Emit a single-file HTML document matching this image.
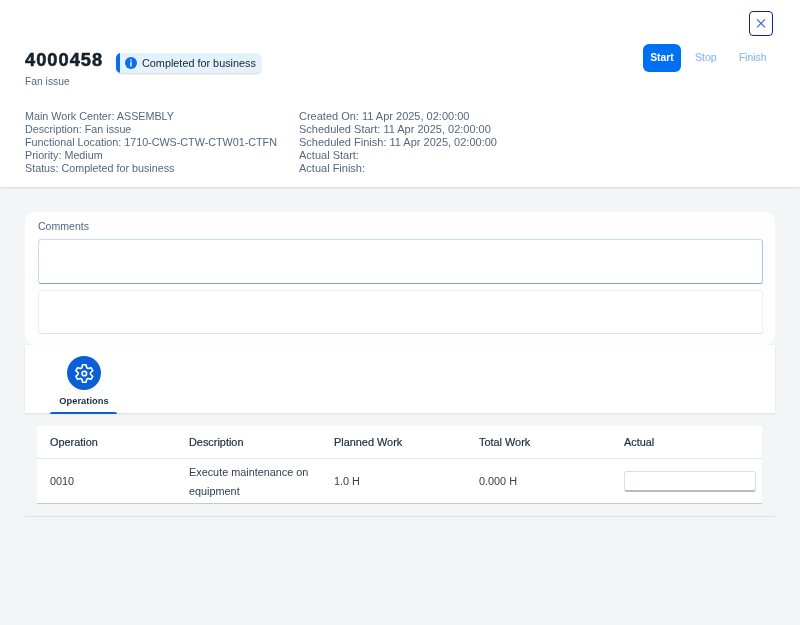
<!DOCTYPE html>
<html><head><meta charset="utf-8">
<style>
*{box-sizing:border-box;margin:0;padding:0}
html,body{width:800px;height:625px;overflow:hidden;background:#f4f5f7;font-family:"Liberation Sans",sans-serif;-webkit-font-smoothing:antialiased}
.abs{will-change:transform}
.abs{position:absolute}
#hdr{position:absolute;left:0;top:0;width:800px;height:187px;background:#fff;box-shadow:0 1px 2px rgba(0,0,0,.12)}
#close{left:749px;top:11px;width:24px;height:25px;border:1.6px solid #0f1f9e;border-radius:4px}
#title{left:25px;top:49.4px;font-size:18.3px;letter-spacing:1px;font-weight:bold;color:#16222e;-webkit-text-stroke:0.55px #16222e}
#tag{left:116px;top:52.5px;width:145px;height:20px;background:#e4f2fe;border-radius:5px;box-shadow:0 1px 2px rgba(0,0,0,.18);overflow:hidden}
#tag:before{content:"";position:absolute;left:0;top:0;width:4px;height:100%;background:#0a6cf0}
#tagtxt{left:142px;top:56.7px;font-size:10.85px;color:#17222d;white-space:nowrap}
#info{left:125px;top:57px;width:12px;height:12px;border-radius:50%;background:#0a6cf0;}
#sub{left:25px;top:75.8px;font-size:10.3px;color:#556b82}
.det{font-size:10.75px;line-height:13px;color:#536880;white-space:nowrap}
#start{left:643px;top:44px;width:38px;height:27.5px;background:#0070f2;border-radius:6px;color:#fff;font-weight:bold;font-size:10.4px;text-align:center;line-height:28px}
.lbtn{font-size:10.5px;color:#8cb9ef;top:52px;-webkit-text-stroke:0.15px #8cb9ef}
#card{left:25px;top:212px;width:750px;height:133px;background:#fefefe;border-radius:10px}
#clbl{left:38px;top:220px;font-size:10.55px;color:#536880}
#in1{left:37.5px;top:239px;width:725px;height:44.5px;border:1px solid #c4daf6;border-bottom:1.5px solid #7b9ff0;border-right-color:#a9c2f2;border-radius:3px;background:#fff}
#in2{left:37.5px;top:290px;width:725px;height:44px;border:1px solid #eeefee;border-bottom:1.5px solid #dfe2e5;border-radius:3px;background:#fff}
#tabs{left:25px;top:345px;width:750px;height:68px;background:#fff;box-shadow:0 1px 2px rgba(0,0,0,.1)}
#ico{left:66.8px;top:356.4px;width:34px;height:34px;border-radius:50%;background:#0b60d8}
#opslbl{left:40px;width:88px;text-align:center;top:395.5px;font-size:9.3px;font-weight:bold;color:#1d2d3e;letter-spacing:0.05px}
#uline{left:50px;top:412px;width:67px;height:2.2px;background:#0b60d8;border-radius:2px 2px 0 0}
#tbl{left:37.4px;top:426px;width:725.1px;height:78px;background:#fff;border-bottom:1px solid #c3cad3}
#tsep{left:37.4px;top:458px;width:725.1px;height:1px;background:#e3e6ea}
.th{top:436px;font-size:10.9px;color:#1d2d3e;white-space:nowrap;-webkit-text-stroke:0.2px #1d2d3e}
.td{font-size:10.85px;color:#32404f;white-space:nowrap}
#act{left:624px;top:471px;width:132px;height:20.5px;border:1px solid #dadfe4;border-bottom:2px solid #b3bcc6;border-radius:3px;background:#fff}
#hr{left:25px;top:516px;width:750px;height:1px;background:#dcdfe3}
</style></head><body>
<div id="hdr"></div>
<div id="close" class="abs"><svg width="24" height="25" viewBox="0 0 24 25" style="position:absolute;left:-1.5px;top:-1.5px"><path d="M8 8.3L16 16.3M16 8.3L8 16.3" stroke="#2d5fe0" stroke-width="1.1" fill="none"/></svg></div>
<div id="title" class="abs">4000458</div>
<div id="tag" class="abs"></div>
<div id="info" class="abs"><svg width="12" height="12" viewBox="0 0 12 12" style="position:absolute;left:0;top:0"><rect x="5.3" y="2.3" width="1.4" height="1.4" fill="#fff"/><rect x="5.3" y="4.6" width="1.4" height="4.9" fill="#fff"/></svg></div>
<div id="tagtxt" class="abs">Completed for business</div>
<div id="sub" class="abs">Fan issue</div>
<div class="abs det" style="left:25px;top:110px">Main Work Center: ASSEMBLY<br>Description: Fan issue<br>Functional Location: 1710-CWS-CTW-CTW01-CTFN<br>Priority: Medium<br>Status: Completed for business</div>
<div class="abs det" style="left:299px;top:110px;font-size:11px">Created On: 11 Apr 2025, 02:00:00<br>Scheduled Start: 11 Apr 2025, 02:00:00<br>Scheduled Finish: 11 Apr 2025, 02:00:00<br>Actual Start:<br>Actual Finish:</div>
<div id="start" class="abs">Start</div>
<div class="abs lbtn" style="left:694.7px;top:51.4px">Stop</div>
<div class="abs lbtn" style="left:738.8px;top:52.3px;font-size:10.3px">Finish</div>

<div id="card" class="abs"></div>
<div id="clbl" class="abs">Comments</div>
<div id="in1" class="abs"></div>
<div id="in2" class="abs"></div>

<div id="tabs" class="abs"></div>
<div id="ico" class="abs"><svg width="34" height="34" viewBox="0 0 34 34" style="position:absolute;left:0;top:0"><path d="M14.88 11.79 L15.60 8.76 L19.00 8.76 L19.72 11.79 L21.03 12.55 L24.02 11.66 L25.72 14.60 L23.45 16.74 L23.45 18.26 L25.72 20.40 L24.02 23.34 L21.03 22.45 L19.72 23.21 L19.00 26.24 L15.60 26.24 L14.88 23.21 L13.57 22.45 L10.58 23.34 L8.88 20.40 L11.15 18.26 L11.15 16.74 L8.88 14.60 L10.58 11.66 L13.57 12.55Z" fill="none" stroke="#fff" stroke-width="1.6" stroke-linejoin="round"/><circle cx="17.3" cy="17.5" r="2.3" fill="none" stroke="#fff" stroke-width="1.6"/></svg></div>
<div id="opslbl" class="abs">Operations</div>
<div id="uline" class="abs"></div>

<div id="tbl" class="abs"></div>
<div id="tsep" class="abs"></div>
<div class="abs th" style="left:50px">Operation</div>
<div class="abs th" style="left:189px">Description</div>
<div class="abs th" style="left:334px">Planned Work</div>
<div class="abs th" style="left:479px">Total Work</div>
<div class="abs th" style="left:624px">Actual</div>
<div class="abs td" style="left:50px;top:475px">0010</div>
<div class="abs td" style="left:189px;top:462.5px;line-height:19px">Execute maintenance on<br>equipment</div>
<div class="abs td" style="left:334px;top:475px">1.0 H</div>
<div class="abs td" style="left:479px;top:475px">0.000 H</div>
<div id="act" class="abs"></div>
<div id="hr" class="abs"></div>
</body></html>
